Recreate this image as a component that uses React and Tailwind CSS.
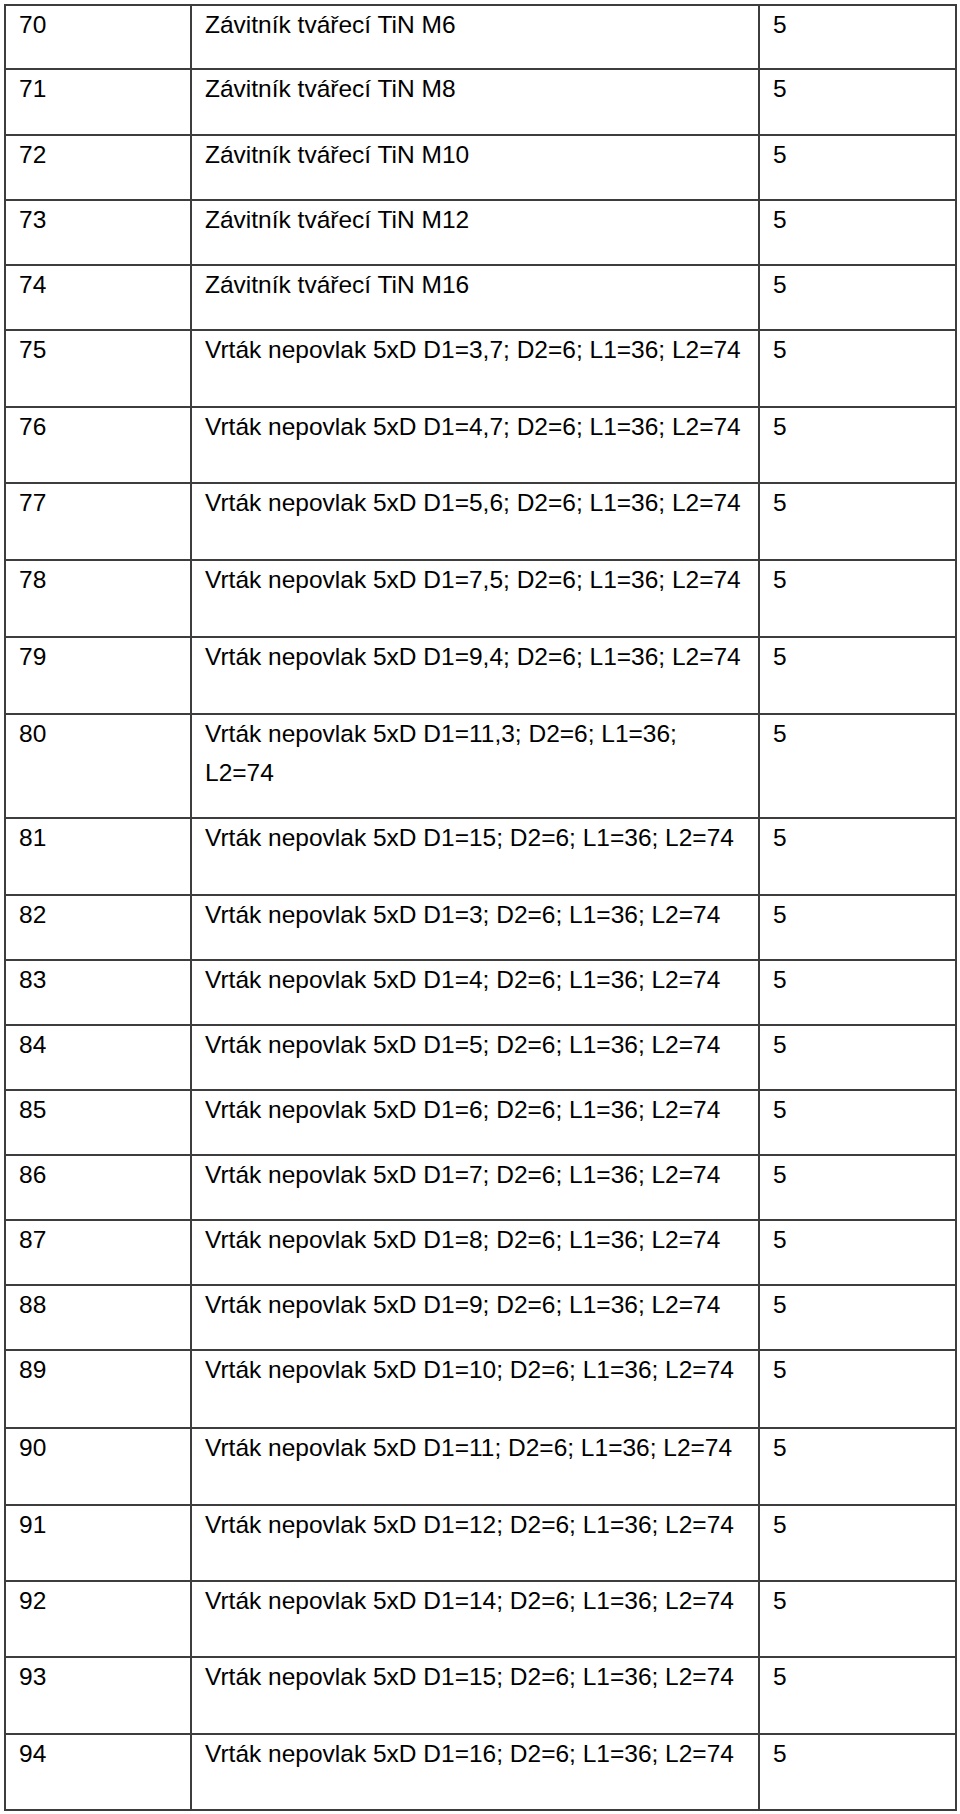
const ROWS = [
  [70, 'Závitník tvářecí TiN M6', 62],
  [71, 'Závitník tvářecí TiN M8', 66],
  [72, 'Závitník tvářecí TiN M10', 65],
  [73, 'Závitník tvářecí TiN M12', 65],
  [74, 'Závitník tvářecí TiN M16', 65],
  [75, 'Vrták nepovlak 5xD D1=3,7; D2=6; L1=36; L2=74', 77],
  [76, 'Vrták nepovlak 5xD D1=4,7; D2=6; L1=36; L2=74', 76],
  [77, 'Vrták nepovlak 5xD D1=5,6; D2=6; L1=36; L2=74', 77],
  [78, 'Vrták nepovlak 5xD D1=7,5; D2=6; L1=36; L2=74', 77],
  [79, 'Vrták nepovlak 5xD D1=9,4; D2=6; L1=36; L2=74', 77],
  [80, ['Vrták nepovlak 5xD D1=11,3; D2=6; L1=36;', 'L2=74'], 104],
  [81, 'Vrták nepovlak 5xD D1=15; D2=6; L1=36; L2=74', 77],
  [82, 'Vrták nepovlak 5xD D1=3; D2=6; L1=36; L2=74', 65],
  [83, 'Vrták nepovlak 5xD D1=4; D2=6; L1=36; L2=74', 65],
  [84, 'Vrták nepovlak 5xD D1=5; D2=6; L1=36; L2=74', 65],
  [85, 'Vrták nepovlak 5xD D1=6; D2=6; L1=36; L2=74', 65],
  [86, 'Vrták nepovlak 5xD D1=7; D2=6; L1=36; L2=74', 65],
  [87, 'Vrták nepovlak 5xD D1=8; D2=6; L1=36; L2=74', 65],
  [88, 'Vrták nepovlak 5xD D1=9; D2=6; L1=36; L2=74', 65],
  [89, 'Vrták nepovlak 5xD D1=10; D2=6; L1=36; L2=74', 78],
  [90, 'Vrták nepovlak 5xD D1=11; D2=6; L1=36; L2=74', 77],
  [91, 'Vrták nepovlak 5xD D1=12; D2=6; L1=36; L2=74', 76],
  [92, 'Vrták nepovlak 5xD D1=14; D2=6; L1=36; L2=74', 76],
  [93, 'Vrták nepovlak 5xD D1=15; D2=6; L1=36; L2=74', 77],
  [94, 'Vrták nepovlak 5xD D1=16; D2=6; L1=36; L2=74', 76],
]

function Cell({ children, className = '' }) {
  return (
    <div className={`h-full pl-[13px] ${className}`}>
      <div className="-mt-[1px] whitespace-nowrap">{children}</div>
    </div>
  )
}

export default function App() {
  return (
    <div className="min-h-[1814px] bg-white pt-[4px] pl-[4px] text-black text-[24.5px] leading-[39px] font-['Liberation_Sans',Arial,sans-serif]">
      <div className="w-[953px] border-2 border-[#3d3d3d]">
        {ROWS.map(([num, text, h], i) => (
          <div
            key={num}
            className={`flex overflow-hidden ${i > 0 ? 'border-t-2 border-[#3d3d3d]' : ''}`}
            style={{ height: h }}
          >
            <Cell className="w-[184px] shrink-0">{num}</Cell>
            <Cell className="w-[568px] shrink-0 border-l-2 border-[#3d3d3d]">
              {Array.isArray(text) ? (
                <>
                  {text[0]}
                  <br />
                  {text[1]}
                </>
              ) : (
                text
              )}
            </Cell>
            <Cell className="flex-1 border-l-2 border-[#3d3d3d]">5</Cell>
          </div>
        ))}
      </div>
    </div>
  )
}
